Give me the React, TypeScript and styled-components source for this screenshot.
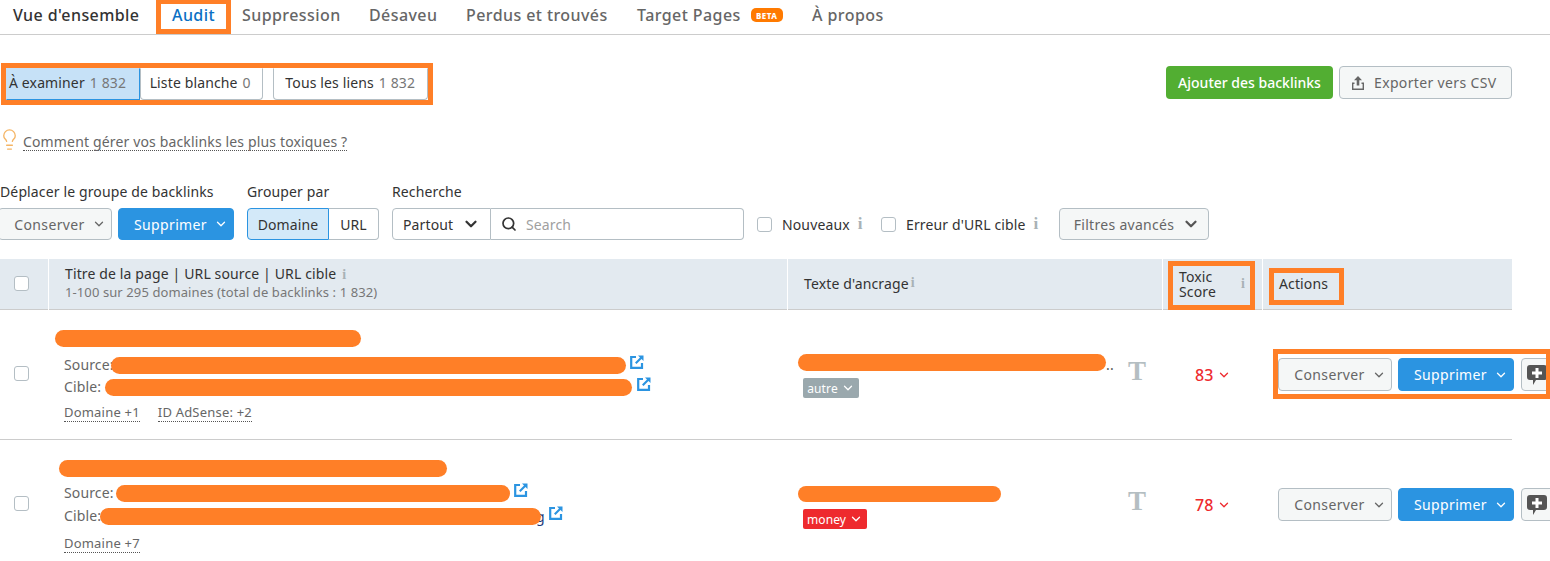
import React from 'react'
import styled, { createGlobalStyle } from 'styled-components'
import { ChevronDown, Lightbulb, Search } from 'lucide-react'

const ORANGE = '#ff7f27'

const GlobalStyle = createGlobalStyle`
  html, body {
    margin: 0;
    height: 561px;
    overflow: hidden;
    background: #fff;
    font-family: "Noto Sans", "Open Sans", sans-serif;
    font-size: 14px;
    letter-spacing: 0.13px;
    color: #333;
  }
  * { box-sizing: border-box; }
`

const Page = styled.div`
  width: 1550px;
  height: 561px;
  overflow: hidden;
`

const Tabs = styled.nav`
  display: flex;
  height: 35px;
  border-bottom: 1px solid #ccc;
  padding-left: 13px;
  font-size: 16px;
  font-weight: 500;
  letter-spacing: 0.42px;
  color: #6a6a6a;
`

const Tab = styled.a<{ $w: number; $dark?: boolean }>`
  display: flex;
  align-items: center;
  width: ${(p) => p.$w}px;
  height: 34px;
  padding-bottom: 4px;
  flex: none;
  white-space: nowrap;
  color: ${(p) => (p.$dark ? '#333' : '#666')};
`

const AuditTab = styled.a`
  display: flex;
  align-items: center;
  justify-content: center;
  width: 75px;
  height: 34px;
  flex: none;
  margin-right: 11px;
  padding-bottom: 3px;
  border: 5px solid ${ORANGE};
  border-top-width: 4px;
  color: #0a70c4;
`

const BetaBadge = styled.span`
  display: inline-flex;
  align-items: center;
  justify-content: center;
  width: 32px;
  height: 14px;
  margin-left: 10px;
  border-radius: 5px;
  background: #ff7a00;
  color: #fff;
  font-size: 8px;
  font-weight: 800;
  letter-spacing: 0.4px;
`

const TopRow = styled.div`
  display: flex;
  justify-content: space-between;
  margin-top: 28px;
  padding: 0 38px 0 1px;
`

const SegmentFrame = styled.div`
  display: flex;
  width: 432px;
  height: 42px;
  border: 5px solid ${ORANGE};
`

const Segment = styled.div<{ $w: number; $pl: number; $active?: boolean; $ml?: number }>`
  display: flex;
  align-items: center;
  gap: 5px;
  width: ${(p) => p.$w}px;
  height: 32px;
  margin-left: ${(p) => p.$ml ?? 0}px;
  padding: 0 0 4px ${(p) => p.$pl}px;
  white-space: nowrap;
  background: ${(p) => (p.$active ? '#c6e1f7' : '#fff')};
  border: 1px solid ${(p) => (p.$active ? 'transparent' : '#b4bec4')};
  border-top-color: transparent;
  border-bottom-color: ${(p) => (p.$active ? '#2b94e1' : '#b4bec4')};
  border-right-color: ${(p) => (p.$active ? '#2b94e1' : '#b4bec4')};
  border-radius: ${(p) => (p.$active ? 0 : '0 0 4px 4px')};
`

const Count = styled.span`
  color: #777;
`

const TopActions = styled.div`
  display: flex;
  gap: 6px;
  margin-top: 3px;
`

const GreenButton = styled.button`
  width: 167px;
  height: 33px;
  padding: 0;
  border: 0;
  border-radius: 4px;
  background: #52ae32;
  color: #fff;
  font: 500 14px "Noto Sans", sans-serif;
`

const ExportButton = styled.button`
  display: flex;
  align-items: center;
  gap: 8px;
  width: 173px;
  height: 33px;
  padding: 0 0 0 10px;
  border: 1px solid #b4bec4;
  border-radius: 4px;
  background: #f5f7f7;
  color: #666;
  font: 14px "Noto Sans", sans-serif;
  letter-spacing: 0.35px;
`

const Hint = styled.div`
  display: flex;
  align-items: center;
  height: 22px;
  margin-top: 26px;
  color: #f5b565;

  svg {
    flex: none;
    margin: -5px 2px 0 -2px;
  }
`

const DottedLink = styled.a<{ $size?: number }>`
  color: #666;
  font-size: ${(p) => p.$size ?? 14}px;
  letter-spacing: ${(p) => (p.$size ? 0.2 : 0.15)}px;
  line-height: 17px;
  border-bottom: 1px dotted #555;
  white-space: nowrap;
`

const Filters = styled.div`
  display: flex;
  align-items: flex-end;
  gap: 13px;
  margin-top: 30px;
`

const FilterGroup = styled.div`
  display: flex;
  flex-direction: column;
  gap: 7px;
`

const FilterLabel = styled.label`
  height: 18px;
  line-height: 18px;
  white-space: nowrap;
`

const Controls = styled.div<{ $gap?: number; $ml?: number }>`
  display: flex;
  gap: ${(p) => p.$gap ?? 0}px;
  margin-left: ${(p) => p.$ml ?? 0}px;
`

const ActionButton = styled.button<{ $w: number; $h?: number; $primary?: boolean }>`
  display: flex;
  align-items: center;
  justify-content: center;
  gap: 7px;
  flex: none;
  width: ${(p) => p.$w}px;
  height: ${(p) => p.$h ?? 33}px;
  padding: 0 0 0 10px;
  border: 1px solid ${(p) => (p.$primary ? '#2b94e1' : '#b4bec4')};
  border-radius: 4px;
  background: ${(p) => (p.$primary ? '#2b94e1' : '#f5f7f7')};
  color: ${(p) => (p.$primary ? '#fff' : '#666')};
  font: 14px "Noto Sans", sans-serif;
  letter-spacing: 0.35px;
`

const ToggleButton = styled.div<{ $w: number; $active?: boolean }>`
  display: flex;
  align-items: center;
  justify-content: center;
  width: ${(p) => p.$w}px;
  height: 32px;
  background: ${(p) => (p.$active ? '#d3e9f9' : '#fff')};
  border: 1px solid ${(p) => (p.$active ? '#2b94e1' : '#b4bec4')};
  border-left-width: ${(p) => (p.$active ? 1 : 0)}px;
  border-radius: ${(p) => (p.$active ? '4px 0 0 4px' : '0 4px 4px 0')};
`

const ScopeSelect = styled.div`
  display: flex;
  align-items: center;
  justify-content: space-between;
  width: 99px;
  height: 32px;
  padding: 0 10px 0 10px;
  border: 1px solid #b4bec4;
  border-radius: 4px 0 0 4px;
`

const SearchBox = styled.div`
  display: flex;
  align-items: center;
  gap: 9px;
  width: 253px;
  height: 32px;
  padding-left: 10px;
  border: 1px solid #b4bec4;
  border-left: 0;
  border-radius: 0 4px 4px 0;
  color: #a0a0a0;
`

const CheckRow = styled.div<{ $w: number }>`
  display: flex;
  align-items: center;
  flex: none;
  width: ${(p) => p.$w}px;
  height: 32px;
  white-space: nowrap;
`

const Checkbox = styled.span<{ $mr?: number; $mt?: number }>`
  display: block;
  flex: none;
  width: 15px;
  height: 15px;
  margin-right: ${(p) => p.$mr ?? 0}px;
  margin-top: ${(p) => p.$mt ?? 0}px;
  background: #fff;
  border: 1px solid #b4bec4;
  border-radius: 3px;
`

const Info = styled.span<{ $size?: number; $ml?: number }>`
  margin-left: ${(p) => p.$ml ?? 8}px;
  color: #a9b2b6;
  font: bold ${(p) => p.$size ?? 17}px "Liberation Serif", serif;
`

const FiltersButton = styled.button`
  display: flex;
  align-items: center;
  justify-content: center;
  gap: 8px;
  width: 150px;
  height: 32px;
  padding: 0 0 0 6px;
  border: 1px solid #b4bec4;
  border-radius: 4px;
  background: #f5f7f7;
  color: #666;
  font: 14px "Noto Sans", sans-serif;
  letter-spacing: 0.3px;
`

const COLUMNS = '48px 739px 375px 100px 250px'

const TableHead = styled.div`
  display: grid;
  grid-template-columns: ${COLUMNS};
  width: 1512px;
  height: 51px;
  margin-top: 19px;
  background: #e3eaf0;
  border-bottom: 1px solid #ccc;
`

const HeadCell = styled.div<{ $first?: boolean; $bare?: boolean }>`
  display: flex;
  align-items: center;
  padding: ${(p) => (p.$bare ? 0 : `0 0 3px ${p.$first ? 14 : 16}px`)};
  border-left: ${(p) => (p.$first ? 0 : 1)}px solid #fff;
  min-width: 0;
`

const HeadStack = styled.div`
  display: flex;
  flex-direction: column;
  line-height: 18px;
`

const SubText = styled.span`
  color: #777;
  font-size: 13px;
  letter-spacing: 0.1px;
  white-space: nowrap;
`

const ToxicFrame = styled.div`
  display: flex;
  align-items: center;
  justify-content: space-between;
  flex: none;
  width: 87px;
  height: 49px;
  margin: 2px 0 0 5px;
  padding: 0 5px 3px 6px;
  border: 5px solid ${ORANGE};
  line-height: 15px;
`

const ActionsFrame = styled.div`
  display: flex;
  align-items: center;
  align-self: flex-start;
  width: 75px;
  height: 37px;
  margin: 9px 0 0 6px;
  padding: 0 0 7px 5px;
  border: 5px solid ${ORANGE};
  white-space: nowrap;
`

const Row = styled.div<{ $h: number; $border?: boolean }>`
  display: grid;
  grid-template-columns: ${COLUMNS};
  width: 1512px;
  height: ${(p) => p.$h}px;
  border-bottom: ${(p) => (p.$border ? '1px solid #ccc' : 0)};
`

const CheckCell = styled.div`
  padding-left: 14px;
`

const LinkCell = styled.div`
  display: flex;
  flex-direction: column;
  padding: 20px 0 0 16px;
  color: #666;
`

const Scribble = styled.span<{ $w: number; $ml?: number; $h?: number }>`
  position: relative;
  z-index: 1;
  display: block;
  flex: none;
  width: ${(p) => p.$w}px;
  height: ${(p) => p.$h ?? 17}px;
  margin-left: ${(p) => p.$ml ?? 0}px;
  border-radius: 9px;
  background: ${ORANGE};
`

const UrlLine = styled.div<{ $mt: number }>`
  display: flex;
  align-items: center;
  height: 17px;
  margin-top: ${(p) => p.$mt}px;
  white-space: nowrap;
`

const UrlLabel = styled.span<{ $w: number }>`
  flex: none;
  width: ${(p) => p.$w}px;
  padding-bottom: 2px;
`

const TextEnd = styled.span`
  color: #1a3a7a;
  margin-left: -5px;
`

const ExternalLink = styled.svg<{ $ml: number }>`
  flex: none;
  width: 14px;
  height: 14px;
  margin: -7px 0 0 ${(p) => p.$ml}px;
  color: #2b94e1;
`

const LinkRow = styled.div<{ $mt: number }>`
  display: flex;
  gap: 18px;
  margin-top: ${(p) => p.$mt}px;
`

const AnchorCell = styled.div<{ $top: number }>`
  display: flex;
  padding: ${(p) => p.$top}px 0 0 16px;
`

const AnchorStack = styled.div`
  display: flex;
  flex-direction: column;
  align-items: flex-start;
  width: 325px;
  flex: none;
`

const AnchorLine = styled.div`
  display: flex;
  align-items: flex-end;
  color: #555;
  line-height: 13px;
`

const Tag = styled.span<{ $w: number; $bg: string }>`
  display: flex;
  align-items: center;
  justify-content: center;
  gap: 3px;
  width: ${(p) => p.$w}px;
  height: 20px;
  margin-top: 7px;
  border-radius: 2px;
  background: ${(p) => p.$bg};
  color: #fff;
  font-size: 12px;
`

const TypeGlyph = styled.span<{ $mt: number }>`
  margin-top: ${(p) => p.$mt}px;
  color: #b4bec2;
  font: bold 27px/19px "Liberation Serif", serif;
`

const ScoreCell = styled.div`
  display: flex;
  align-items: center;
  gap: 3px;
  height: 20px;
  margin-top: 55px;
  padding-left: 33px;
  color: #ee2a2e;
  font-size: 16px;
  font-weight: 500;
`

const ActionCell = styled.div`
  padding-left: 11px;
`

const RowActions = styled.div<{ $marked?: boolean }>`
  display: flex;
  flex: none;
  width: 277px;
  height: 50px;
  margin-top: 39px;
  padding-top: 4px;
  overflow: ${(p) => (p.$marked ? 'hidden' : 'visible')};
  border: 5px solid ${(p) => (p.$marked ? ORANGE : 'transparent')};
  border-right-width: 4px;
`

const RowButtons = styled.div`
  display: flex;
  gap: 6px;
  height: 33px;
`

const NoteButton = styled.button`
  display: flex;
  align-items: center;
  flex: none;
  width: 34px;
  height: 33px;
  margin-left: 1px;
  padding: 0 0 0 4px;
  border: 1px solid #b4bec4;
  border-radius: 4px;
  background: #f5f7f7;
`

const ExternalIcon = ({ ml }: { ml: number }) => (
  <ExternalLink $ml={ml} viewBox="0 0 14 14" fill="none">
    <path d="M6 2H1.2v10.8H12V8" stroke="currentColor" strokeWidth="2.2" />
    <path d="M8 0.5h5.5V6L11.5 4 6.5 9 5 7.5l5-5z" fill="currentColor" />
  </ExternalLink>
)

const NoteIcon = () => (
  <svg width="22" height="22" viewBox="0 0 22 22">
    <path
      d="M4 1h14a3 3 0 0 1 3 3v9a3 3 0 0 1-3 3h-8l-3 5v-5H4a3 3 0 0 1-3-3V4a3 3 0 0 1 3-3z"
      fill="#555"
    />
    <path d="M9.5 4h3v3.5H16v3h-3.5V14h-3v-3.5H6v-3h3.5z" fill="#fff" />
  </svg>
)

const ExportIcon = () => (
  <svg width="16" height="16" viewBox="0 0 16 16" fill="#666">
    <path d="M8 1l4 4.2H9.3v5.3H6.7V5.2H4z" />
    <path d="M2 7.5h2.5V9H3.4v4.6h9.2V9h-1.1V7.5H14V15H2z" />
  </svg>
)

const Chevron = ({ color = '#666', size = 14 }: { color?: string; size?: number }) => (
  <ChevronDown size={size} color={color} strokeWidth={2.2} />
)

const DarkChevron = ({ color = '#333' }: { color?: string }) => (
  <ChevronDown size={18} color={color} strokeWidth={3} />
)

const BacklinkActions = ({ marked }: { marked?: boolean }) => (
  <RowActions $marked={marked}>
    <RowButtons>
      <ActionButton $w={114}>
        Conserver <Chevron />
      </ActionButton>
      <ActionButton $w={116} $primary>
        Supprimer <Chevron color="#fff" />
      </ActionButton>
      <NoteButton>
        <NoteIcon />
      </NoteButton>
    </RowButtons>
  </RowActions>
)

export default function App() {
  return (
    <Page>
      <GlobalStyle />
      <Tabs>
        <Tab $w={143} $dark>
          Vue d'ensemble
        </Tab>
        <AuditTab>Audit</AuditTab>
        <Tab $w={127}>Suppression</Tab>
        <Tab $w={97}>Désaveu</Tab>
        <Tab $w={171}>Perdus et trouvés</Tab>
        <Tab $w={175}>
          Target Pages<BetaBadge>BETA</BetaBadge>
        </Tab>
        <Tab $w={80}>À propos</Tab>
      </Tabs>

      <TopRow>
        <SegmentFrame>
          <Segment $w={134} $pl={2} $active>
            À examiner <Count>1 832</Count>
          </Segment>
          <Segment $w={124} $pl={9}>
            Liste blanche <Count>0</Count>
          </Segment>
          <Segment $w={155} $pl={11} $ml={10}>
            Tous les liens <Count>1 832</Count>
          </Segment>
        </SegmentFrame>
        <TopActions>
          <GreenButton>Ajouter des backlinks</GreenButton>
          <ExportButton>
            <ExportIcon />
            Exporter vers CSV
          </ExportButton>
        </TopActions>
      </TopRow>

      <Hint>
        <Lightbulb size={23} strokeWidth={1.4} />
        <DottedLink>Comment gérer vos backlinks les plus toxiques ?</DottedLink>
      </Hint>

      <Filters>
        <FilterGroup>
          <FilterLabel>Déplacer le groupe de backlinks</FilterLabel>
          <Controls $gap={6} $ml={-2}>
            <ActionButton $w={114} $h={32}>
              Conserver <Chevron />
            </ActionButton>
            <ActionButton $w={116} $h={32} $primary>
              Supprimer <Chevron color="#fff" />
            </ActionButton>
          </Controls>
        </FilterGroup>
        <FilterGroup>
          <FilterLabel>Grouper par</FilterLabel>
          <Controls>
            <ToggleButton $w={82} $active>
              Domaine
            </ToggleButton>
            <ToggleButton $w={50}>URL</ToggleButton>
          </Controls>
        </FilterGroup>
        <FilterGroup>
          <FilterLabel>Recherche</FilterLabel>
          <Controls>
            <ScopeSelect>
              Partout <DarkChevron />
            </ScopeSelect>
            <SearchBox>
              <Search size={16} color="#333" strokeWidth={2.6} />
              Search
            </SearchBox>
          </Controls>
        </FilterGroup>
        <CheckRow $w={111}>
          <Checkbox $mr={10} />
          Nouveaux
          <Info>i</Info>
        </CheckRow>
        <CheckRow $w={165}>
          <Checkbox $mr={10} />
          Erreur d'URL cible
          <Info>i</Info>
        </CheckRow>
        <FiltersButton>
          Filtres avancés <DarkChevron color="#555" />
        </FiltersButton>
      </Filters>

      <TableHead>
        <HeadCell $first>
          <Checkbox />
        </HeadCell>
        <HeadCell>
          <HeadStack>
            <span>
              Titre de la page | URL source | URL cible
              <Info $size={14} $ml={6}>
                i
              </Info>
            </span>
            <SubText>1-100 sur 295 domaines (total de backlinks : 1 832)</SubText>
          </HeadStack>
        </HeadCell>
        <HeadCell>
          Texte d'ancrage
          <Info $size={14} $ml={2}>
            i
          </Info>
        </HeadCell>
        <HeadCell $bare>
          <ToxicFrame>
            <span>
              Toxic
              <br />
              Score
            </span>
            <Info $size={14}>i</Info>
          </ToxicFrame>
        </HeadCell>
        <HeadCell $bare>
          <ActionsFrame>Actions</ActionsFrame>
        </HeadCell>
      </TableHead>

      <Row $h={130} $border>
        <CheckCell>
          <Checkbox $mt={56} />
        </CheckCell>
        <LinkCell>
          <Scribble $w={306} $ml={-9} />
          <UrlLine $mt={10}>
            <UrlLabel $w={47}>Source:</UrlLabel>
            <Scribble $w={515} />
            <ExternalIcon ml={4} />
          </UrlLine>
          <UrlLine $mt={5}>
            <UrlLabel $w={41}>Cible:</UrlLabel>
            <Scribble $w={527} />
            <ExternalIcon ml={5} />
          </UrlLine>
          <LinkRow $mt={8}>
            <DottedLink $size={13}>Domaine +1</DottedLink>
            <DottedLink $size={13}>ID AdSense: +2</DottedLink>
          </LinkRow>
        </LinkCell>
        <AnchorCell $top={44}>
          <AnchorStack>
            <AnchorLine>
              <Scribble $w={308} $ml={-5} />
              ..
            </AnchorLine>
            <Tag $w={56} $bg="#9aa8ad">
              autre <Chevron color="#fff" size={14} />
            </Tag>
          </AnchorStack>
          <TypeGlyph $mt={8}>T</TypeGlyph>
        </AnchorCell>
        <ScoreCell>
          83 <Chevron color="#ee2a2e" />
        </ScoreCell>
        <ActionCell>
          <BacklinkActions marked />
        </ActionCell>
      </Row>

      <Row $h={121}>
        <CheckCell>
          <Checkbox $mt={56} />
        </CheckCell>
        <LinkCell>
          <Scribble $w={388} $ml={-5} />
          <UrlLine $mt={8}>
            <UrlLabel $w={52}>Source:</UrlLabel>
            <Scribble $w={394} />
            <ExternalIcon ml={4} />
          </UrlLine>
          <UrlLine $mt={6}>
            <UrlLabel $w={36}>Cible:</UrlLabel>
            <Scribble $w={441} />
            <TextEnd>g</TextEnd>
            <ExternalIcon ml={4} />
          </UrlLine>
          <LinkRow $mt={10}>
            <DottedLink $size={13}>Domaine +7</DottedLink>
          </LinkRow>
        </LinkCell>
        <AnchorCell $top={46}>
          <AnchorStack>
            <Scribble $w={203} $ml={-5} $h={16} />
            <Tag $w={64} $bg="#ee2a2e">
              money <Chevron color="#fff" size={14} />
            </Tag>
          </AnchorStack>
          <TypeGlyph $mt={6}>T</TypeGlyph>
        </AnchorCell>
        <ScoreCell>
          78 <Chevron color="#ee2a2e" />
        </ScoreCell>
        <ActionCell>
          <BacklinkActions />
        </ActionCell>
      </Row>
    </Page>
  )
}
